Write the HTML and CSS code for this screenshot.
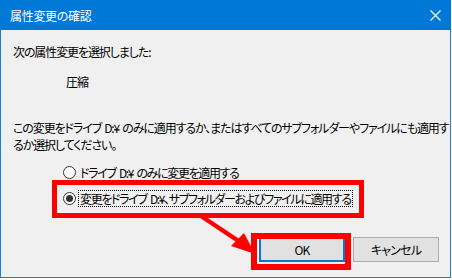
FILE: index.html
```html
<!DOCTYPE html>
<html lang="ja">
<head>
<meta charset="utf-8">
<title>属性変更の確認</title>
<link rel="stylesheet" href="styles.css">
</head>
<body>
<div class="window">
  <div class="titlebar">
    <span class="title">属性変更の確認</span>
    <svg class="close" width="11" height="11" viewBox="0 0 11 11"><path d="M0.5 0.5 L10.5 10.5 M10.5 0.5 L0.5 10.5" stroke="#fff" stroke-width="1.1" fill="none"/></svg>
  </div>
  <div class="content">
    <p class="line intro">次の属性変更を選択しました:</p>
    <p class="line attr">圧縮</p>
    <p class="line para">この変更をドライブ D:¥ のみに適用するか、またはすべてのサブフォルダーやファイルにも適用す<br>るか選択してください。</p>
    <div class="options">
      <div class="option"><span class="radio"></span><span class="label">ドライブ D:¥ のみに変更を適用する</span></div>
      <div class="option"><span class="radio checked"></span><span class="label focus">変更をドライブ D:¥、サブフォルダーおよびファイルに適用する</span></div>
    </div>
    <div class="buttons">
      <button class="btn default">OK</button>
      <button class="btn">キャンセル</button>
    </div>
  </div>
  <div class="mark mark-option"></div>
  <div class="mark mark-ok"></div>
  <svg class="arrow" width="452" height="280" viewBox="0 0 452 280">
    <line x1="201" y1="216" x2="240" y2="242" stroke="#f00" stroke-width="4.5"/>
    <polygon points="244,233 231,246 255,254" fill="#f00"/>
  </svg>
</div>
</body>
</html>
```

FILE: styles.css
```css
html, body {
  margin: 0;
  padding: 0;
  background: #ffffff;
}

body {
  font-family: "Noto Sans CJK JP", "Noto Sans", sans-serif;
  font-size: 12px;
  color: #000;
  font-feature-settings: "palt";
}

.window {
  position: relative;
  width: 451px;
  height: 278px;
  box-sizing: border-box;
  border: 1px solid #1a7fd6;
  border-top: none;
  background: #f0f0f0;
  display: flex;
  flex-direction: column;
}

.titlebar {
  height: 30px;
  margin: 0 -1px;
  background: #0078d7;
  color: #fff;
  display: flex;
  align-items: center;
  justify-content: space-between;
  padding: 0 10px 0 10px;
  flex-shrink: 0;
}

.title {
  font-size: 12px;
  line-height: 17px;
  letter-spacing: -0.3px;
}

.close {
  display: block;
}

.content {
  display: flex;
  flex-direction: column;
  padding: 13px 0 0 12px;
  letter-spacing: -1.1px;
  word-spacing: 1.5px;
}

.line {
  margin: 0;
  line-height: 17px;
  white-space: nowrap;
}

.attr {
  margin-top: 13px;
  padding-left: 53px;
}

.para {
  margin-top: 29px;
}

.options {
  display: flex;
  flex-direction: column;
  gap: 9px;
  margin-top: 11px;
  padding-left: 50px;
}

.option {
  display: flex;
  align-items: center;
  height: 17px;
  white-space: nowrap;
}

.radio {
  width: 13px;
  height: 13px;
  box-sizing: border-box;
  border: 1px solid #333;
  border-radius: 50%;
  background: #fff;
  position: relative;
  flex-shrink: 0;
  margin-right: 2px;
}

.radio.checked::after {
  content: "";
  position: absolute;
  left: 2px;
  top: 2px;
  width: 7px;
  height: 7px;
  border-radius: 50%;
  background: #333;
}

.label {
  line-height: 15px;
  padding: 0 1px;
  border: 1px solid transparent;
  letter-spacing: -1.35px;
  word-spacing: 2px;
}

.label.focus {
  border: 1px dotted #000;
}

.buttons {
  display: flex;
  justify-content: flex-end;
  gap: 8px;
  margin-top: 30px;
  padding-right: 11px;
}

.btn {
  width: 86px;
  height: 25px;
  box-sizing: border-box;
  font-family: inherit;
  font-size: 12px;
  letter-spacing: -0.8px;
  color: #000;
  background: #e1e1e1;
  border: 1px solid #adadad;
  padding: 0;
  font-feature-settings: "palt";
}

.btn.default {
  border: 2px solid #0078d7;
}

.mark {
  position: absolute;
  box-sizing: border-box;
  border: 5px solid #f00;
}

.mark-option {
  left: 51px;
  top: 180px;
  width: 312px;
  height: 38px;
}

.mark-ok {
  left: 250px;
  top: 233px;
  width: 100px;
  height: 37px;
  border-width: 6px;
}

.arrow {
  position: absolute;
  left: -1px;
  top: 0;
  pointer-events: none;
}
```
